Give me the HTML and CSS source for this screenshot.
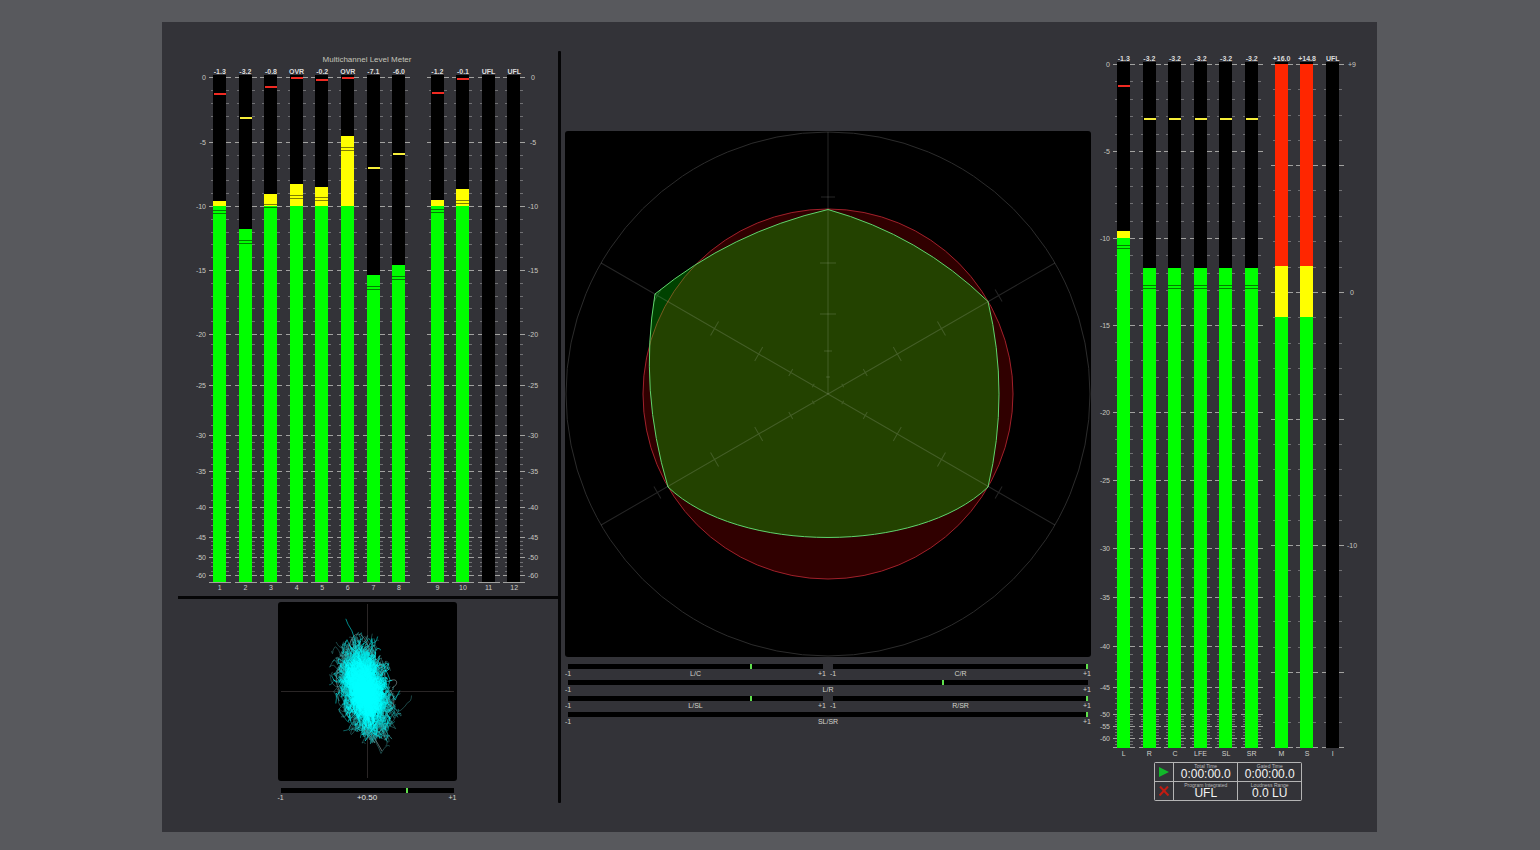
FILE: index.html
```html
<!DOCTYPE html>
<html lang="en">
<head>
<meta charset="utf-8">
<title>Multichannel Level Meter</title>
<link rel="stylesheet" href="styles.css">
</head>
<body>
<main class="app">
  <section class="left">
    <h1 class="title">Multichannel Level Meter</h1>
    <div class="meter meter-multi" id="multi">
      <svg class="axis axis-left"></svg>
      <div class="columns"></div>
      <svg class="axis axis-right"></svg>
    </div>
    <hr class="rule">
    <div class="scope-row">
      <div class="scope">
        <svg class="scope-view" viewBox="0 0 179 179" role="img" aria-label="Vectorscope">
          <path class="cross" d="M3 89.5H176M89.5 2V176"/>
          <g id="trace"></g>
        </svg>
        <div class="corr">
          <div class="corr-bar"><i class="corr-mark" style="left:72.9%"></i></div>
          <div class="corr-text"><span>-1</span><span class="corr-value">+0.50</span><span>+1</span></div>
        </div>
      </div>
    </div>
  </section>

  <div class="divider"></div>

  <section class="center">
    <svg class="radar" viewBox="565 131 526 526" role="img" aria-label="Surround sound scope">
      <circle class="radar-ring" cx="828" cy="394" r="262"/>
      <circle class="radar-red" cx="828" cy="394" r="185"/>
      <path class="radar-green" d="M828 209.5Q919.5 235 988 301.5Q1010 394 988 487C918 554.3 738 554.3 668 487Q639 390 655 294Q731 232 828 209.5Z"/>
      <g id="spokes"></g>
    </svg>
    <div class="corr-grid">
      <div class="corr">
        <div class="corr-bar"><i class="corr-mark" style="left:71.9%"></i></div>
        <div class="corr-text"><span>-1</span><span>L/C</span><span>+1</span></div>
      </div>
      <div class="corr">
        <div class="corr-bar"><i class="corr-mark" style="left:99.8%"></i></div>
        <div class="corr-text"><span>-1</span><span>C/R</span><span>+1</span></div>
      </div>
      <div class="corr corr-wide">
        <div class="corr-bar"><i class="corr-mark" style="left:72.1%"></i></div>
        <div class="corr-text"><span>-1</span><span>L/R</span><span>+1</span></div>
      </div>
      <div class="corr">
        <div class="corr-bar"><i class="corr-mark" style="left:71.9%"></i></div>
        <div class="corr-text"><span>-1</span><span>L/SL</span><span>+1</span></div>
      </div>
      <div class="corr">
        <div class="corr-bar"><i class="corr-mark" style="left:99.8%"></i></div>
        <div class="corr-text"><span>-1</span><span>R/SR</span><span>+1</span></div>
      </div>
      <div class="corr corr-wide">
        <div class="corr-bar"><i class="corr-mark" style="left:99.9%"></i></div>
        <div class="corr-text"><span>-1</span><span>SL/SR</span><span>+1</span></div>
      </div>
    </div>
  </section>

  <section class="right">
    <div class="meter meter-surround" id="surround">
      <svg class="axis axis-left"></svg>
      <div class="columns"></div>
      <svg class="axis axis-right"></svg>
      <div class="loudness">
        <button class="cell" type="button" aria-label="Start"><svg width="10" height="10" viewBox="0 0 10 10"><path d="M0 0L10 5L0 10Z" fill="#12b82a"/></svg></button>
        <div class="cell"><span class="cell-label">Total Time</span><span class="cell-value">0:00:00.0</span></div>
        <div class="cell"><span class="cell-label">Gated Time</span><span class="cell-value">0:00:00.0</span></div>
        <button class="cell" type="button" aria-label="Reset"><svg width="10" height="10" viewBox="0 0 10 10"><path d="M1 0.5L9.5 9.5M9 0.5L0.5 9.5" fill="none" stroke="#c01c12" stroke-width="2"/></svg></button>
        <div class="cell"><span class="cell-label">Program Integrated</span><span class="cell-value">UFL</span></div>
        <div class="cell"><span class="cell-label">Loudness Range</span><span class="cell-value">0.0 LU</span></div>
      </div>
    </div>
  </section>
</main>
<script src="app.js"></script>
</body>
</html>
```
FILE: styles.css
```css
* { box-sizing: border-box; }

body {
  margin: 0;
  min-height: 100vh;
  padding: 22px 0 18px;
  display: grid;
  grid-template-columns: 162fr 1215fr 163fr;
  background: #58595d;
  color: #cfcfcc;
  font: 7px/8px "Liberation Sans", Arial, sans-serif;
}

.app {
  grid-column: 2;
  display: grid;
  grid-template-columns: 396fr 3px 534fr 282fr;
  padding: 29px 0;
  background: #333338;
}

.divider { background: #050506; border-radius: 1px; }

.left { padding-top: 3px; }

.title {
  margin: 0 0 1px 14px;
  font-size: 8px;
  line-height: 12px;
  font-weight: 400;
  text-align: center;
  color: #c4c4b8;
}

.rule {
  height: 3px;
  margin: 2px 0 3px 16px;
  border: 0;
  background: #050506;
}

/* Level meters */
.meter { display: grid; }
.meter-multi, .scope-row { grid-template-columns: 45fr 320fr 31fr; }
.meter-surround { grid-template-columns: 32fr 469fr 63fr; padding-top: 3px; }

.columns { display: grid; grid-column: 2; }
.meter-multi .columns { grid-template-columns: repeat(8, 2fr) 1fr repeat(4, 2fr); }
.meter-surround .columns { grid-template-columns: repeat(6, 6fr) 1fr repeat(3, 6fr); }

.column { display: flex; flex-direction: column; align-items: stretch; min-width: 0; }
.reading, .name { display: flex; justify-content: center; white-space: nowrap; }
.reading { font-weight: 700; color: #dcdcdc; height: 8px; line-height: 9px; }
.name { height: 12px; line-height: 12px; }
.track { display: block; width: 100%; overflow: visible; shape-rendering: crispEdges; }
.meter-multi .track, .meter-multi .axis { height: 507px; }
.meter-surround .track, .meter-surround .axis { height: 686px; }

.axis { width: 100%; margin-top: 8px; overflow: visible; fill: #c8c8c0; }
.axis-left { text-anchor: end; }
.axis-right { text-anchor: middle; }

.major { fill: #a2a2a0; }
.minor { fill: #707073; }
.well { fill: #000; }
.green { fill: #00ff00; }
.yellow { fill: #ffff00; }
.red { fill: #ff2600; }
.peak-red { fill: #f02a22; }
.peak-yellow { fill: #f6ee3a; }
.hold { fill: #000; opacity: 0.5; }

/* Vectorscope */
.scope-row { display: grid; }
.scope { grid-column: 2; justify-self: center; width: 179px; }
.scope-view { display: block; width: 100%; margin-bottom: 7px; background: #000; border-radius: 3px; }
.cross { fill: none; stroke: #2a2626; }
.trace-line { fill: none; stroke-width: 0.6; }

/* Correlation bars */
.corr-bar { position: relative; height: 5px; margin: 0 3px; background: #000; }
.corr-mark { position: absolute; top: 0; width: 2px; height: 5px; margin-left: -1px; background: #5fe04c; }
.corr-text { display: grid; grid-template-columns: 1fr auto 1fr; line-height: 9px; color: #d4d4cc; }
.corr-text span:last-child { text-align: right; }
.corr-value { font-size: 8px; color: #e6e6e6; }
.corr-grid { display: grid; grid-template-columns: 1fr 1fr; gap: 2px 4px; }
.corr-wide { grid-column: 1 / -1; }

/* Surround scope */
.center { padding: 80px 4px 0; }
.radar { display: block; width: 100%; margin-bottom: 7px; background: #000; border-radius: 3px; }
.radar-ring { fill: none; stroke: #2c2c2c; }
.radar-red { fill: #300000; stroke: #a0202a; }
.radar-green { fill: rgba(0, 255, 0, 0.26); stroke: #5fd46c; }
.spoke { fill: none; stroke: #fff; stroke-opacity: 0.15; }

/* Loudness readout */
.loudness {
  grid-column: 2;
  justify-self: center;
  display: grid;
  grid-template-columns: 18px 63px 63px;
  grid-auto-rows: 18px;
  gap: 1px;
  margin-top: 2px;
  padding: 1px;
  background: #b4b4b4;
  border-radius: 2px;
}
.cell {
  display: flex;
  flex-direction: column;
  align-items: center;
  justify-content: center;
  padding: 0;
  border: 0;
  background: #333338;
  white-space: nowrap;
}
.cell-label { font-size: 5px; line-height: 5px; color: #b8b8b8; }
.cell-value { font-size: 12px; line-height: 11px; color: #f4f4f4; }
```
FILE: app.js
```js
const NS = 'http://www.w3.org/2000/svg';

function add(parent, tag, attrs, text) {
  const el = document.createElementNS(NS, tag);
  for (const k in attrs) el.setAttribute(k, attrs[k]);
  if (text !== undefined) el.textContent = text;
  parent.appendChild(el);
  return el;
}

// Ticks between labelled points; stops are [dB label, y, steps to the next stop].
function ticks(stops) {
  const out = [];
  stops.forEach(([label, y, steps], i) => {
    out.push({ y, major: label !== '' });
    if (i + 1 === stops.length) return;
    const next = stops[i + 1][1];
    for (let s = 1; s < steps; s++) out.push({ y: y + (next - y) * s / steps, major: false });
  });
  return out;
}

function buildMeter(id, height, columns, leftStops, rightStops) {
  const root = document.getElementById(id);
  const holder = root.querySelector('.columns');
  columns.forEach(c => {
    const col = document.createElement('div');
    holder.appendChild(col);
    if (!c) return;
    col.className = 'column';
    const reading = document.createElement('span');
    reading.className = 'reading';
    reading.textContent = c.reading;
    col.appendChild(reading);
    const svg = add(col, 'svg', { class: 'track', viewBox: `0 0 26 ${height}`, preserveAspectRatio: 'none' });
    ticks(c.scale).forEach(t => {
      add(svg, 'rect', { class: t.major ? 'major' : 'minor', x: t.major ? 2 : 4, y: Math.round(t.y), width: t.major ? 22 : 18, height: 1 });
    });
    add(svg, 'rect', { class: 'well', x: 6.5, y: 0, width: 13, height });
    (c.levels || []).forEach(([kind, top], i) => {
      const end = c.levels[i + 1] ? c.levels[i + 1][1] : height;
      add(svg, 'rect', { class: kind, x: 6.5, y: top, width: 13, height: end - top });
    });
    if (c.hold) {
      add(svg, 'rect', { class: 'hold', x: 6.5, y: c.hold, width: 13, height: 1 });
      add(svg, 'rect', { class: 'hold', x: 6.5, y: c.hold + 3, width: 13, height: 1 });
    }
    if (c.peak) add(svg, 'rect', { class: c.peak[0], x: 7, y: c.peak[1], width: 12, height: 2 });
    const name = document.createElement('span');
    name.className = 'name';
    name.textContent = c.name;
    col.appendChild(name);
  });
  const write = (sel, stops, attrs) => {
    const axis = root.querySelector(sel);
    stops.forEach(([label, y]) => {
      if (label && label !== '_') add(axis, 'text', { ...attrs, y: y + 3 }, label);
    });
  };
  write('.axis-left', leftStops, { x: '100%', dx: -1 });
  write('.axis-right', rightStops, { x: 6 });
}

const multiScale = [['0', 2, 5], ['-5', 67, 5], ['-10', 131, 5], ['-15', 195, 5], ['-20', 259, 5],
  ['-25', 310, 5], ['-30', 360, 5], ['-35', 396, 5], ['-40', 432, 5], ['-45', 462, 5],
  ['-50', 482, 4], ['-60', 500, 1], ['_', 507, 1]];

const ch = (name, reading, levels, hold, peak, scale = multiScale) => ({ name, reading, levels, hold, peak, scale });
buildMeter('multi', 507, [
  ch('1', '-1.3', [['yellow', 126], ['green', 131]], 135, ['peak-red', 18]),
  ch('2', '-3.2', [['green', 154]], 165, ['peak-yellow', 42]),
  ch('3', '-0.8', [['yellow', 119], ['green', 131]], 129, ['peak-red', 11]),
  ch('4', 'OVR', [['yellow', 109], ['green', 131]], 120, ['peak-red', 2]),
  ch('5', '-0.2', [['yellow', 112], ['green', 131]], 122, ['peak-red', 4]),
  ch('6', 'OVR', [['yellow', 61], ['green', 131]], 72, ['peak-red', 2]),
  ch('7', '-7.1', [['green', 200]], 211, ['peak-yellow', 92]),
  ch('8', '-6.0', [['green', 190]], 201, ['peak-yellow', 78]),
  null,
  ch('9', '-1.2', [['yellow', 125], ['green', 131]], 134, ['peak-red', 17]),
  ch('10', '-0.1', [['yellow', 114], ['green', 131]], 125, ['peak-red', 3]),
  ch('11', 'UFL'),
  ch('12', 'UFL')
], multiScale, multiScale);

const surroundScale = [['0', 2, 5], ['-5', 89, 5], ['-10', 176, 5], ['-15', 263, 5], ['-20', 350, 5],
  ['-25', 418, 5], ['-30', 486, 5], ['-35', 535, 5], ['-40', 584, 5], ['-45', 625, 5],
  ['-50', 652, 5], ['-55', 664, 4], ['-60', 676, 3], ['_', 685, 1]];
const loudScale = [['+9', 2, 4], ['_', 103, 5], ['0', 230, 5], ['_', 357, 5], ['-10', 483, 5], ['_', 610, 3], ['_', 685, 1]];

const full = ['peak-yellow', 56];
const sur = name => ch(name, '-3.2', [['green', 206]], 223, full, surroundScale);
const loud = [['red', 2], ['yellow', 204], ['green', 255]];
buildMeter('surround', 686, [
  ch('L', '-1.3', [['yellow', 169], ['green', 176]], 183, ['peak-red', 23], surroundScale),
  sur('R'), sur('C'), sur('LFE'), sur('SL'), sur('SR'),
  null,
  ch('M', '+16.0', loud, 0, null, loudScale),
  ch('S', '+14.8', loud, 0, null, loudScale),
  ch('I', 'UFL', [], 0, null, loudScale)
], surroundScale, loudScale);

// Spokes of the surround scope
const spokes = document.getElementById('spokes');
[0, 60, 120, 240, 300].forEach(angle => {
  let d = 'M0 0V-262';
  [[197, 7], [131, 8], [80, 8], [43, 4], [17, 2]].forEach(([r, w]) => { d += `M${-w} ${-r}H${w}`; });
  add(spokes, 'path', { class: 'spoke', d, transform: `translate(828 394) rotate(${angle})` });
});

// Vectorscope trace: seeded squiggles, dim at the rim and bright in the core
let seed = 7;
const rnd = () => (seed = (seed * 16807) % 2147483647) / 2147483647;
const trace = document.getElementById('trace');
function squiggles(count, min, max, step, stroke, opacity) {
  for (let n = 0; n < count; n++) {
    const a = rnd() * 6.28, r = min + (max - min) * rnd();
    const v = Math.sin(a) * r * 50;
    let x = 87 + Math.cos(a) * r * 25 + v * 0.19, y = 88 + v;
    let d = `M${x.toFixed(1)} ${y.toFixed(1)}`;
    for (let i = 0; i < 4; i++) {
      const cx = x + (rnd() - 0.5) * step, cy = y + (rnd() - 0.5) * step * 1.6;
      x = cx + (rnd() - 0.5) * step;
      y = cy + (rnd() - 0.5) * step * 1.6;
      d += `Q${cx.toFixed(1)} ${cy.toFixed(1)} ${x.toFixed(1)} ${y.toFixed(1)}`;
    }
    add(trace, 'path', { class: 'trace-line', d, stroke, opacity });
  }
}
add(trace, 'path', { class: 'trace-line', stroke: '#8a9a9a', d: 'M68 55C71 42 74 32 80 32C87 32 90 46 96 55C104 62 107 70 108 80' });
add(trace, 'path', { class: 'trace-line', stroke: '#9ab0b0', d: 'M66 60C58 68 56 78 61 88M110 80C119 74 122 82 114 86M112 88C118 96 116 104 113 108M93 130L104 149M88 128L97 141M84 122L92 138M104 128L108 138' });
squiggles(150, 0.7, 0.96, 8, '#3f9c9c', 0.75);
squiggles(260, 0.45, 0.85, 9, '#18b8b8', 0.9);
squiggles(420, 0, 0.68, 10, '#00e6e6', 1);
squiggles(420, 0, 0.5, 9, '#00ffff', 1);
```
